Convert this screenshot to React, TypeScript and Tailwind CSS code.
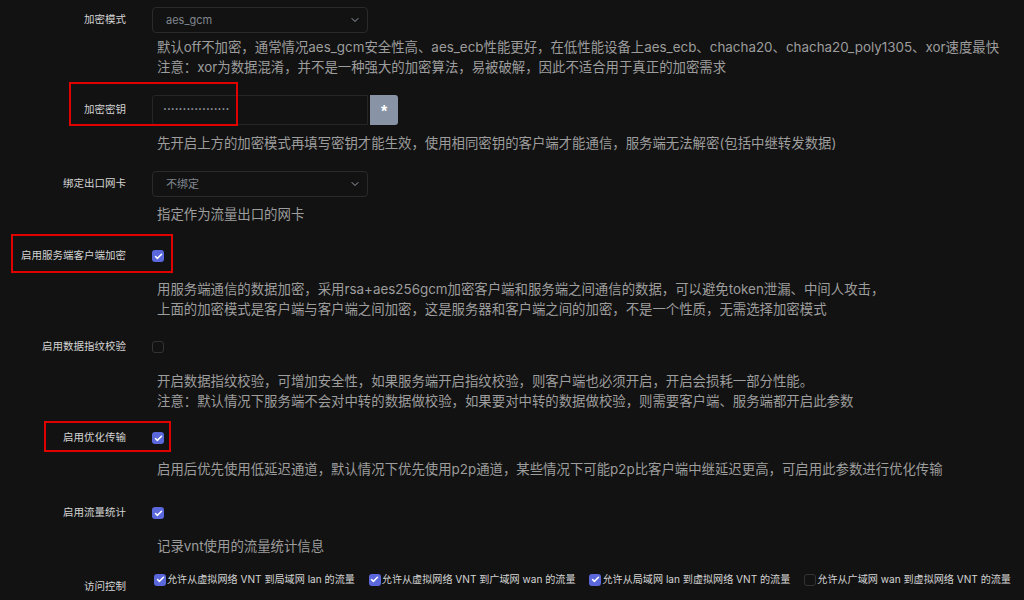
import { ChevronDown, Check } from 'lucide-react'

const font = { fontFamily: '"Inter", "Noto Sans CJK SC", sans-serif' }

function Box({ checked }: { checked: boolean }) {
  return checked ? (
    <span className="inline-flex items-center justify-center w-[12px] h-[12px] rounded-[3px] bg-[#5a68dc] shrink-0">
      <Check className="w-[9px] h-[9px] text-white" strokeWidth={4} />
    </span>
  ) : (
    <span className="inline-block w-[12px] h-[12px] rounded-[3px] border border-[#333] shrink-0" />
  )
}

function Select({ value }: { value: string }) {
  return (
    <div className="w-[216px] h-[26px] rounded-[4px] border border-[#2a2a2a] flex items-center justify-between pl-[13px] pr-[6px] text-[11px] text-[#80868f]">
      <span>{value}</span>
      <ChevronDown className="w-[12px] h-[12px] text-[#9aa0a8]" strokeWidth={2} />
    </div>
  )
}

function Row({ label, children, h = 26, mt }: { label: string; children: React.ReactNode; h?: number; mt: string }) {
  return (
    <div className={`flex items-center ${mt}`} style={{ height: h }}>
      <div className="w-[126px] shrink-0 text-right text-[10.5px] text-[#d4d4d4]">{label}</div>
      <div className="ml-[26px] flex items-center">{children}</div>
    </div>
  )
}

function Help({ lines, mt }: { lines: string[]; mt: string }) {
  return (
    <div className={`ml-[157px] text-[13.4px] leading-[20px] text-[#9d9d9d] ${mt}`}>
      {lines.map((l) => (
        <div key={l} className="whitespace-nowrap">{l}</div>
      ))}
    </div>
  )
}

const access: [boolean, string][] = [
  [true, '允许从虚拟网络 VNT 到局域网 lan 的流量'],
  [true, '允许从虚拟网络 VNT 到广域网 wan 的流量'],
  [true, '允许从局域网 lan 到虚拟网络 VNT 的流量'],
  [false, '允许从广域网 wan 到虚拟网络 VNT 的流量'],
]

export default function App() {
  return (
    <div className="relative w-[1024px] h-[600px] overflow-hidden bg-[#121212]" style={font}>
      <Row label="加密模式" mt="mt-[7px]">
        <Select value="aes_gcm" />
      </Row>
      <Help
        mt="mt-[4px]"
        lines={[
          '默认off不加密，通常情况aes_gcm安全性高、aes_ecb性能更好，在低性能设备上aes_ecb、chacha20、chacha20_poly1305、xor速度最快',
          '注意：xor为数据混淆，并不是一种强大的加密算法，易被破解，因此不适合用于真正的加密需求',
        ]}
      />

      <Row label="加密密钥" h={30} mt="mt-[18px]">
        <div
          className="w-[216px] h-[30px] border border-[#262626] rounded-l-[3px] flex items-center pl-[10px] text-[6.5px] text-[#8a8f98]"
          style={{ fontFamily: '"Liberation Mono", monospace' }}
        >
          •••••••••••••••••
        </div>
        <div
          className="ml-[2px] w-[28px] h-[30px] rounded-r-[3px] bg-[#8893a5] flex items-center justify-center text-white text-[16px] font-bold pt-[3px]"
          style={{ fontFamily: '"Liberation Sans", sans-serif' }}
        >
          *
        </div>
      </Row>
      <Help mt="mt-[8px]" lines={['先开启上方的加密模式再填写密钥才能生效，使用相同密钥的客户端才能通信，服务端无法解密(包括中继转发数据)']} />

      <Row label="绑定出口网卡" mt="mt-[18px]">
        <Select value="不绑定" />
      </Row>
      <Help mt="mt-[7px]" lines={['指定作为流量出口的网卡']} />

      <Row label="启用服务端客户端加密" mt="mt-[19px]">
        <Box checked />
      </Row>
      <Help
        mt="mt-[10px]"
        lines={[
          '用服务端通信的数据加密，采用rsa+aes256gcm加密客户端和服务端之间通信的数据，可以避免token泄漏、中间人攻击，',
          '上面的加密模式是客户端与客户端之间加密，这是服务器和客户端之间的加密，不是一个性质，无需选择加密模式',
        ]}
      />

      <Row label="启用数据指纹校验" mt="mt-[15px]">
        <Box checked={false} />
      </Row>
      <Help
        mt="mt-[11px]"
        lines={[
          '开启数据指纹校验，可增加安全性，如果服务端开启指纹校验，则客户端也必须开启，开启会损耗一部分性能。',
          '注意：默认情况下服务端不会对中转的数据做校验，如果要对中转的数据做校验，则需要客户端、服务端都开启此参数',
        ]}
      />

      <Row label="启用优化传输" mt="mt-[14px]">
        <Box checked />
      </Row>
      <Help mt="mt-[8px]" lines={['启用后优先使用低延迟通道，默认情况下优先使用p2p通道，某些情况下可能p2p比客户端中继延迟更高，可启用此参数进行优化传输']} />

      <Row label="启用流量统计" mt="mt-[21px]">
        <Box checked />
      </Row>
      <Help mt="mt-[10px]" lines={['记录vnt使用的流量统计信息']} />

      <div className="flex mt-[9px]">
        <div className="w-[126px] shrink-0 text-right text-[10.5px] text-[#d4d4d4] pt-[14px]">访问控制</div>
        <div className="ml-[28px] flex items-center gap-[14px]">
          {access.map(([c, t]) => (
            <label key={t} className="flex items-center text-[10.1px] text-[#d4d4d4] whitespace-nowrap">
              <Box checked={c} />
              <span className="ml-[1px]">{t}</span>
            </label>
          ))}
        </div>
      </div>

      {/* annotation boxes */}
      <div className="absolute left-[69px] top-[82px] w-[169px] h-[44px] border-2 border-[#e00000]" />
      <div className="absolute left-[11px] top-[234px] w-[162px] h-[39px] border-2 border-[#e00000]" />
      <div className="absolute left-[44px] top-[421px] w-[127px] h-[31px] border-2 border-[#e00000]" />
    </div>
  )
}
